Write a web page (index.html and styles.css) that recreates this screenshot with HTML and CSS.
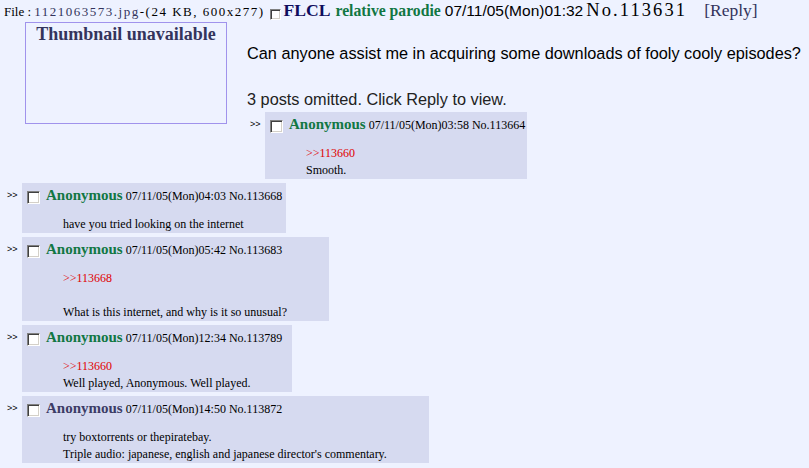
FILE: index.html
```html
<!DOCTYPE html>
<html lang="en">
<head>
  <meta charset="UTF-8">
  <meta name="viewport" content="width=device-width, initial-scale=1.0">
  <title>FLCL</title>
  <link rel="stylesheet" href="styles.css">
</head>
<body>
  <div class="thread">
    <div class="op-head">
      <span class="filesize">File : <span class="fileinfo"><a class="filename" href="#">1121063573.jpg</a>-(24 KB, 600x277)</span></span>
      <span class="chk"></span>
      <span class="subject">FLCL</span>
      <span class="postername">relative parodie</span>
      <span class="op-date">07/11/05(Mon)01:32</span>
      <span class="op-no">No.113631</span>
      <a class="replylink" href="#">[Reply]</a>
    </div>

    <div class="thumb">Thumbnail unavailable</div>
    <p class="comment">Can anyone assist me in acquiring some downloads of fooly cooly episodes?</p>
    <p class="omitted">3 posts omitted. Click Reply to view.</p>

    <div class="reply-row">
      <span class="dd">&gt;&gt;</span>
      <div class="reply">
        <div class="reply-head"><span class="chk"></span> <span class="name">Anonymous</span> 07/11/05(Mon)03:58 No.113664</div>
        <blockquote><a class="quote" href="#">&gt;&gt;113660</a><br>Smooth.</blockquote>
      </div>
    </div>

    <div class="reply-row">
      <span class="dd">&gt;&gt;</span>
      <div class="reply">
        <div class="reply-head"><span class="chk"></span> <span class="name">Anonymous</span> 07/11/05(Mon)04:03 No.113668</div>
        <blockquote>have you tried looking on the internet</blockquote>
      </div>
    </div>

    <div class="reply-row">
      <span class="dd">&gt;&gt;</span>
      <div class="reply">
        <div class="reply-head"><span class="chk"></span> <span class="name">Anonymous</span> 07/11/05(Mon)05:42 No.113683</div>
        <blockquote><a class="quote" href="#">&gt;&gt;113668</a><br><br>What is this internet, and why is it so unusual?</blockquote>
      </div>
    </div>

    <div class="reply-row">
      <span class="dd">&gt;&gt;</span>
      <div class="reply">
        <div class="reply-head"><span class="chk"></span> <span class="name">Anonymous</span> 07/11/05(Mon)12:34 No.113789</div>
        <blockquote><a class="quote" href="#">&gt;&gt;113660</a><br>Well played, Anonymous. Well played.</blockquote>
      </div>
    </div>

    <div class="reply-row">
      <span class="dd">&gt;&gt;</span>
      <div class="reply">
        <div class="reply-head"><span class="chk"></span> <span class="name visited">Anonymous</span> 07/11/05(Mon)14:50 No.113872</div>
        <blockquote>try boxtorrents or thepiratebay.<br>Triple audio: japanese, english and japanese director's commentary.</blockquote>
      </div>
    </div>
  </div>
</body>
</html>
```

FILE: styles.css
```css
html, body {
  overflow: hidden;
}
body {
  margin: 0 0 0 4px;
  background-color: #eef2ff;
  color: #000;
  font-family: "Liberation Serif", "Times New Roman", serif;
  font-size: 12px;
}
a {
  color: #34345c;
  text-decoration: none;
}

/* opening post */
.op-head {
  display: flex;
  align-items: baseline;
  height: 22px;
  white-space: nowrap;
}
.filesize {
  font-size: 13px;
}
.fileinfo {
  letter-spacing: 1.5px;
}
.op-head .chk {
  align-self: flex-start;
  width: 9px;
  height: 9px;
  margin: 9px 0 0 5px;
}
.subject {
  margin-left: 3px;
  font-size: 17.6px;
  font-weight: bold;
  color: #0f0c5d;
}
.postername {
  margin-left: 5px;
  font-size: 15.7px;
  font-weight: bold;
  color: #117743;
}
.op-date {
  margin-left: 4px;
  font-family: "Liberation Sans Narrow", "Arial Narrow", "Liberation Sans", sans-serif;
  font-size: 15.5px;
}
.op-no {
  margin-left: 3px;
  font-size: 18.5px;
  letter-spacing: 2.1px;
}
.replylink {
  margin-left: 17px;
  font-size: 17.5px;
}
.thumb {
  float: left;
  width: 200px;
  height: 100px;
  margin: 0 20px 0 21px;
  border: 1px solid #a093ec;
  text-align: center;
  font-size: 18px;
  font-weight: bold;
  line-height: 22px;
  color: #34345c;
}
.comment, .omitted {
  font-family: "Liberation Sans", Arial, sans-serif;
  font-size: 16.3px;
  line-height: 19px;
  white-space: nowrap;
}
.comment {
  margin: 22px 0 27px;
}
.omitted {
  margin: 27px 0 3px;
  color: #222;
}

/* replies */
.reply-row {
  display: flex;
  align-items: flex-start;
}
.reply-row + .reply-row {
  margin-top: 4px;
}
.dd {
  width: 10px;
  margin: 2px 5px 0 3px;
  font-family: "Liberation Sans", Arial, sans-serif;
  font-size: 9px;
  line-height: 20px;
}
.reply {
  padding: 2px 2px 0 1px;
  background-color: #d6daf0;
  white-space: nowrap;
}
.reply-head {
  height: 20px;
  line-height: 20px;
}
.reply-head .chk {
  width: 11px;
  height: 11px;
  margin: 0 3px 0 4px;
  vertical-align: middle;
}
.name {
  font-size: 15px;
  font-weight: bold;
  color: #117743;
}
.name.visited {
  color: #3c3c66;
}
blockquote {
  margin: 11px 40px 0 40px;
  line-height: 17px;
}
.quote {
  color: #e00000;
}

.chk {
  display: inline-block;
  background: #fff;
  border: 1px solid;
  border-color: #808080 #fff #fff #808080;
  box-shadow: inset 1px 1px #404040, inset -1px -1px #d4d0c8;
}
```
